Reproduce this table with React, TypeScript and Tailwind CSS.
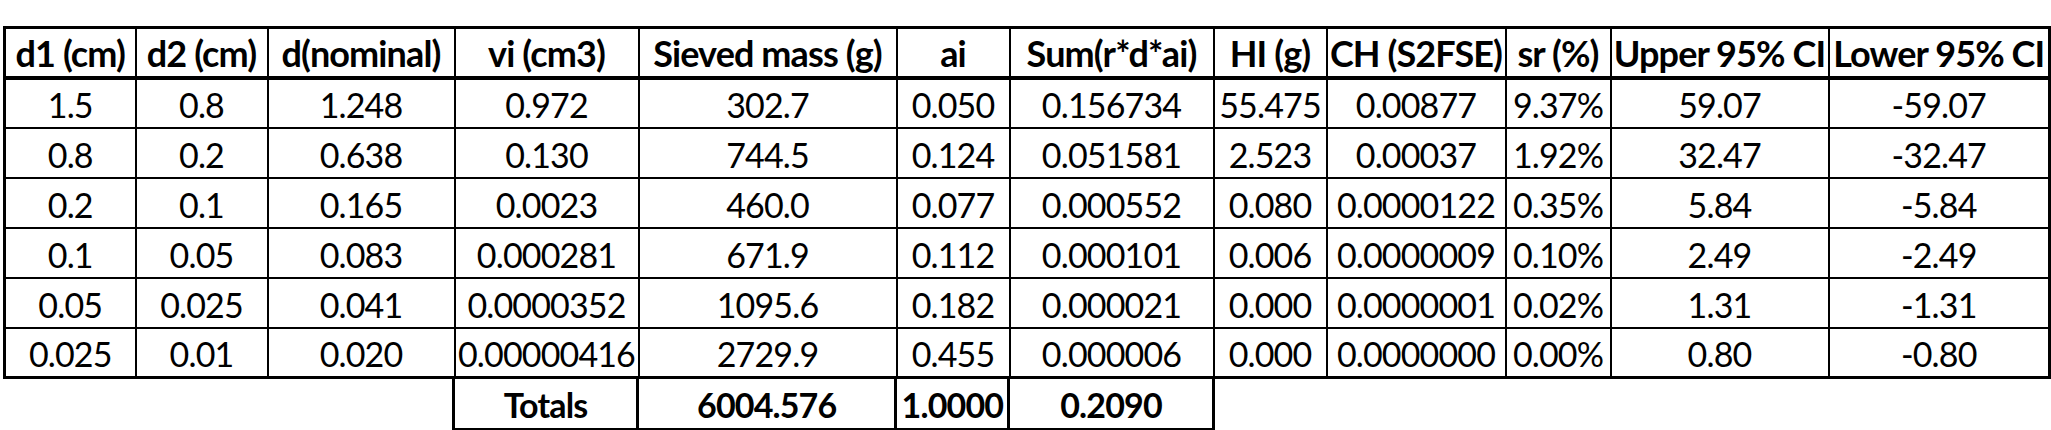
const headers = [
  "d1 (cm)",
  "d2 (cm)",
  "d(nominal)",
  "vi (cm3)",
  "Sieved mass (g)",
  "ai",
  "Sum(r*d*ai)",
  "HI (g)",
  "CH (S2FSE)",
  "sr (%)",
  "Upper 95% CI",
  "Lower 95% CI",
];

const widths = [131, 132, 187, 184, 258, 113, 204, 113, 179, 105, 218, 221];

const rows = [
  ["1.5", "0.8", "1.248", "0.972", "302.7", "0.050", "0.156734", "55.475", "0.00877", "9.37%", "59.07", "-59.07"],
  ["0.8", "0.2", "0.638", "0.130", "744.5", "0.124", "0.051581", "2.523", "0.00037", "1.92%", "32.47", "-32.47"],
  ["0.2", "0.1", "0.165", "0.0023", "460.0", "0.077", "0.000552", "0.080", "0.0000122", "0.35%", "5.84", "-5.84"],
  ["0.1", "0.05", "0.083", "0.000281", "671.9", "0.112", "0.000101", "0.006", "0.0000009", "0.10%", "2.49", "-2.49"],
  ["0.05", "0.025", "0.041", "0.0000352", "1095.6", "0.182", "0.000021", "0.000", "0.0000001", "0.02%", "1.31", "-1.31"],
  ["0.025", "0.01", "0.020", "0.00000416", "2729.9", "0.455", "0.000006", "0.000", "0.0000000", "0.00%", "0.80", "-0.80"],
];

const Cols = () => (
  <colgroup>
    {widths.map((w, i) => (
      <col key={i} style={{ width: w }} />
    ))}
  </colgroup>
);

export default function App() {
  return (
    <div className="w-[2051px] h-[430px] bg-white pt-[26px] pl-[3px] font-['Lato','Open_Sans',sans-serif] text-black">
      <table className="table-fixed border-collapse border-[3px] border-black w-[2047px]">
        <Cols />
        <thead>
          <tr className="h-[50px] border-b-4 border-black">
            {headers.map((h) => (
              <th
                key={h}
                className="border-2 border-black p-0 pt-0.5 text-center text-[36px] font-bold leading-none tracking-tight whitespace-nowrap"
              >
                {h}
              </th>
            ))}
          </tr>
        </thead>
        <tbody>
          {rows.map((r, i) => (
            <tr key={i} className="h-[50px]">
              {r.map((c, j) => (
                <td
                  key={j}
                  className="border-2 border-black p-0 pt-1 text-center text-[34px] leading-none tracking-tight whitespace-nowrap"
                >
                  {c}
                </td>
              ))}
            </tr>
          ))}
        </tbody>
      </table>
      <table className="table-fixed border-collapse w-[2047px]">
        <Cols />
        <tbody>
          <tr className="h-[50px]">
            <td colSpan={3} className="p-0" />
            {["Totals", "6004.576", "1.0000", "0.2090"].map((t) => (
              <td
                key={t}
                className="border-[3px] border-t-0 border-black p-0 pt-1 text-center text-[34px] font-bold leading-none tracking-tight whitespace-nowrap"
              >
                {t}
              </td>
            ))}
            <td colSpan={5} className="p-0" />
          </tr>
        </tbody>
      </table>
    </div>
  );
}
